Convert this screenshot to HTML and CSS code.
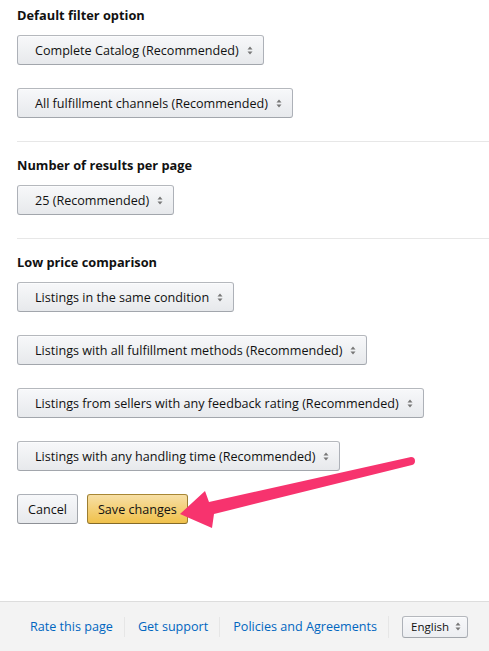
FILE: index.html
```html
<!DOCTYPE html>
<html lang="en">
<head>
<meta charset="utf-8">
<title>Settings</title>
<link rel="stylesheet" href="styles.css">
</head>
<body>
<div class="page">
  <main class="content">
    <section class="group">
      <h3 class="group-title">Default filter option</h3>
      <div class="stack">
        <button class="dropdown"><span>Complete Catalog (Recommended)</span><svg class="caret" viewBox="0 0 6 9" width="6" height="9"><path d="M3 0.5 L5.5 3.5 H0.5 Z M3 8.5 L5.5 5.5 H0.5 Z"/></svg></button>
        <button class="dropdown"><span>All fulfillment channels (Recommended)</span><svg class="caret" viewBox="0 0 6 9" width="6" height="9"><path d="M3 0.5 L5.5 3.5 H0.5 Z M3 8.5 L5.5 5.5 H0.5 Z"/></svg></button>
      </div>
    </section>
    <hr class="divider">
    <section class="group">
      <h3 class="group-title">Number of results per page</h3>
      <div class="stack">
        <button class="dropdown"><span>25 (Recommended)</span><svg class="caret" viewBox="0 0 6 9" width="6" height="9"><path d="M3 0.5 L5.5 3.5 H0.5 Z M3 8.5 L5.5 5.5 H0.5 Z"/></svg></button>
      </div>
    </section>
    <hr class="divider">
    <section class="group">
      <h3 class="group-title">Low price comparison</h3>
      <div class="stack">
        <button class="dropdown"><span>Listings in the same condition</span><svg class="caret" viewBox="0 0 6 9" width="6" height="9"><path d="M3 0.5 L5.5 3.5 H0.5 Z M3 8.5 L5.5 5.5 H0.5 Z"/></svg></button>
        <button class="dropdown"><span>Listings with all fulfillment methods (Recommended)</span><svg class="caret" viewBox="0 0 6 9" width="6" height="9"><path d="M3 0.5 L5.5 3.5 H0.5 Z M3 8.5 L5.5 5.5 H0.5 Z"/></svg></button>
        <button class="dropdown"><span>Listings from sellers with any feedback rating (Recommended)</span><svg class="caret" viewBox="0 0 6 9" width="6" height="9"><path d="M3 0.5 L5.5 3.5 H0.5 Z M3 8.5 L5.5 5.5 H0.5 Z"/></svg></button>
        <button class="dropdown"><span>Listings with any handling time (Recommended)</span><svg class="caret" viewBox="0 0 6 9" width="6" height="9"><path d="M3 0.5 L5.5 3.5 H0.5 Z M3 8.5 L5.5 5.5 H0.5 Z"/></svg></button>
      </div>
      <div class="actions">
        <button class="btn btn-secondary">Cancel</button>
        <button class="btn btn-primary">Save changes</button>
      </div>
    </section>
  </main>
  <footer class="footer">
    <nav class="footer-links">
      <a class="footer-link" href="#">Rate this page</a>
      <a class="footer-link" href="#">Get support</a>
      <a class="footer-link" href="#">Policies and Agreements</a>
      <span class="footer-item"><button class="dropdown dropdown-small"><span>English</span><svg class="caret" viewBox="0 0 6 9" width="6" height="9"><path d="M3 0.5 L5.5 3.5 H0.5 Z M3 8.5 L5.5 5.5 H0.5 Z"/></svg></button></span>
    </nav>
  </footer>
  <svg class="annotation" width="489" height="651" viewBox="0 0 489 651">
    <path class="arrow" d="M180 514 L205 491 L209 502 L411 457 Q415 457 415 461 Q415 464 412 465 L214 514 L212 528 Z"/>
  </svg>
</div>
</body>
</html>
```

FILE: styles.css
```css
* { box-sizing: border-box; }

html, body {
  margin: 0;
  padding: 0;
  background: #fff;
}

body {
  font-family: "Open Sans", "Noto Sans", Arial, sans-serif;
  font-size: 12.6px;
  color: #111;
}

.page {
  position: relative;
  width: 489px;
  height: 651px;
  display: flex;
  flex-direction: column;
  overflow: hidden;
}

.content {
  flex: 1;
  padding: 5px 0 0 17px;
}

.group {
  display: flex;
  flex-direction: column;
  align-items: flex-start;
}

.group-title {
  margin: 0 0 10px;
  font-size: 12.8px;
  line-height: 20px;
  font-weight: 700;
  color: #111;
}

.stack {
  display: flex;
  flex-direction: column;
  align-items: flex-start;
  gap: 23px;
}

.divider {
  border: 0;
  border-top: 1px solid #e7e7e7;
  margin: 23px 0 13px;
  height: 0;
}

.dropdown {
  display: inline-flex;
  align-items: center;
  gap: 8px;
  height: 30px;
  padding: 0 10px 0 17px;
  font: inherit;
  color: #111;
  white-space: nowrap;
  background: linear-gradient(#f7f8fa, #e7e9ec);
  border: 1px solid #adb1b8;
  border-color: #b5b8bd #adb1b8 #a2a6ac;
  border-radius: 3px;
  box-shadow: inset 0 1px 0 rgba(255,255,255,.6);
  cursor: pointer;
}

.caret {
  fill: #777;
  flex: none;
}

.actions {
  display: flex;
  gap: 9px;
  margin-top: 23px;
}

.btn {
  height: 30px;
  padding: 0 10px;
  font: inherit;
  color: #111;
  white-space: nowrap;
  border-radius: 3px;
  border: 1px solid;
  cursor: pointer;
}

.btn-secondary {
  background: linear-gradient(#f7f8fa, #e7e9ec);
  border-color: #adb1b8 #a2a6ac #8d9096;
}

.btn-primary {
  background: linear-gradient(#f7dfa5, #f0c14b);
  border-color: #a88734 #9c7e31 #846a29;
}

.footer {
  flex: none;
  height: 50px;
  background: #f3f3f3;
  border-top: 1px solid #dddddd;
  display: flex;
  align-items: center;
  padding-left: 17px;
}

.footer-links {
  display: flex;
  align-items: center;
  white-space: nowrap;
}

.footer-link,
.footer-item {
  padding: 0 11px 0 13px;
  line-height: 20px;
  border-left: 1px solid #e6e6e6;
}

.footer-link:first-child {
  border-left: 0;
}

.footer-link {
  color: #0066c0;
  text-decoration: none;
}

.dropdown-small {
  height: 22px;
  padding: 0 6px 0 8px;
  gap: 6px;
  font-size: 11.5px;
  background: linear-gradient(#f7f8fa, #eceef1);
}

.footer-item {
  display: flex;
  align-items: center;
  height: 22px;
}

.annotation {
  position: absolute;
  left: 0;
  top: 0;
  pointer-events: none;
}

.arrow {
  fill: #f7336e;
}
```
